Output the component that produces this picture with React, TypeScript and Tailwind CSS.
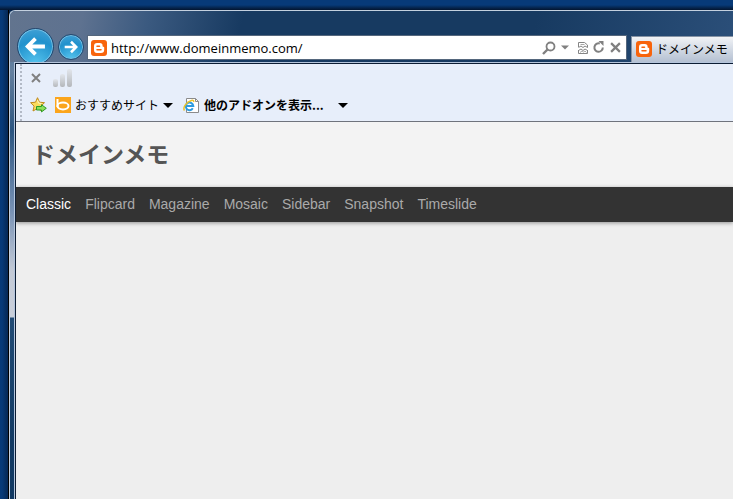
// App.tsx
// Browser window on the desktop, showing the blog in its "Classic" view

import type { ReactNode } from "react";

// ── Icons ─────────────────────────────────────────────────────────────────────

function BloggerIcon() {
  return (
    <svg width="16" height="16" viewBox="0 0 16 16" aria-hidden="true" className="shrink-0">
      <rect width="16" height="16" rx="3" fill="#f8640c" />
      <path
        d="M6 3h2.800a2.800 2.800 0 0 1 2.800 2.800c0 .7.2 1 .8 1 .5 0 .8.3.8.8v2.200A3.200 3.200 0 0 1 10 13H6a3 3 0 0 1-3-3V6a3 3 0 0 1 3-3z"
        fill="#fff"
      />
      <path d="M6 6.200h2.500M6 9.800h4" stroke="#f8640c" strokeWidth="1.500" strokeLinecap="round" />
    </svg>
  );
}

function ArrowIcon({ size }: { size: number }) {
  return (
    <svg width={size} height={size} viewBox="0 0 20 20" aria-hidden="true">
      <path d="M19 10H3M10 2.500L2.500 10l7.500 7.500" fill="none" stroke="#fff" strokeWidth="3.600" />
    </svg>
  );
}

function SearchIcon() {
  return (
    <svg width="14" height="14" viewBox="0 0 14 14" fill="none" stroke="#808080" aria-hidden="true">
      <circle cx="8.500" cy="5.500" r="4" strokeWidth="1.800" />
      <path d="M5.500 8.500L1 13" strokeWidth="2.400" />
    </svg>
  );
}

function BrokenPageIcon() {
  return (
    <svg width="10" height="12" viewBox="0 0 10 12" fill="none" stroke="#858585" aria-hidden="true">
      <path d="M.5 5V.5h6l3 2.500v2.500M.5 8v3.500h9V8" />
      <path d="M.5 5.500L3 4l2 1.500L7 4l2.500 1.500M.5 8.500L3 7l2 1.500L7 7l2.500 1.500" />
      <path d="M2.500 2.500h4M2 10.500l2-1.500 1.500 1L7 9l1.500 1.500" stroke="#a8a8a8" />
    </svg>
  );
}

function RefreshIcon() {
  return (
    <svg width="12" height="13" viewBox="0 0 12 13" fill="none" aria-hidden="true">
      <path d="M9.800 6.500a4.200 4.200 0 1 1-3-4" stroke="#808080" strokeWidth="2" />
      <path d="M5.500 0h5v5z" fill="#808080" />
    </svg>
  );
}

function CrossIcon({ size }: { size: number }) {
  return (
    <svg width={size} height={size} viewBox="0 0 10 10" aria-hidden="true">
      <path d="M1 1l8 8M9 1L1 9" stroke="#808080" strokeWidth="2" />
    </svg>
  );
}

function CaretIcon({ color = "#000" }: { color?: string }) {
  return (
    <svg width="10" height="5" viewBox="0 0 10 5" aria-hidden="true">
      <path d="M0 0h10L5 5z" fill={color} />
    </svg>
  );
}

function SignalIcon() {
  return (
    <svg width="20" height="18" viewBox="0 0 20 18" aria-hidden="true">
      <defs>
        <linearGradient id="signal" x1="0" y1="0" x2="0" y2="1">
          <stop offset="0" stopColor="#e2e6ec" />
          <stop offset="1" stopColor="#b4b7bb" />
        </linearGradient>
      </defs>
      <rect x="0" y="10" width="5" height="8" rx="2" fill="url(#signal)" />
      <rect x="7" y="5" width="5" height="13" rx="2" fill="url(#signal)" />
      <rect x="14" y="0" width="5" height="18" rx="2" fill="url(#signal)" />
    </svg>
  );
}

function AddFavoriteIcon() {
  return (
    <svg width="17" height="16" viewBox="0 0 17 16" aria-hidden="true">
      <path
        d="M7.500.7l2 4.500 5 .5-3.700 3.400 1.100 4.900-4.400-2.500L3 14l1.100-4.900L.6 5.700l4.900-.5z"
        fill="#fbdc5c"
        stroke="#c08a1e"
        strokeLinejoin="round"
      />
      <path d="M7.500 3l1 3 3 .5" fill="none" stroke="#fff8c8" />
      <path
        d="M6.500 9.500h5V7.700l4.800 3.600-4.800 3.600v-1.900h-5z"
        fill="#8ee05a"
        stroke="#2c9a23"
        strokeLinejoin="round"
      />
    </svg>
  );
}

function BingIcon() {
  return (
    <svg width="16" height="16" viewBox="0 0 16 16" aria-hidden="true">
      <rect width="16" height="16" fill="#fba51c" />
      <path d="M2.500 2v8" stroke="#fff" strokeWidth="2" />
      <ellipse cx="8" cy="9" rx="5.500" ry="3.400" fill="none" stroke="#fff" strokeWidth="2" />
    </svg>
  );
}

function IePageIcon() {
  return (
    <svg width="17" height="17" viewBox="0 0 17 17" fill="none" aria-hidden="true">
      <path d="M3.500 1.500h9l3 3v11h-12z" fill="#fff" stroke="#8b8b8b" />
      <path d="M12.500 1.500v3h3" stroke="#8b8b8b" />
      <path d="M9.800 11.300A3.800 3.800 0 1 1 10.300 9H4" stroke="#2c9be0" strokeWidth="2" />
      <path d="M1.500 13.500C-.5 11 3 5 8.500 3.500c2-.5 2.500.5 2 1.500" stroke="#ecc32a" strokeWidth="1.500" />
    </svg>
  );
}

// ── Browser chrome ────────────────────────────────────────────────────────────

function BarButton({ label, children }: { label: string; children: ReactNode }) {
  return (
    <button type="button" aria-label={label} className="flex items-center">
      {children}
    </button>
  );
}

function NavigationBar() {
  return (
    <div className="flex h-[51px] items-end overflow-hidden pl-[7px]">
      <button
        type="button"
        aria-label="戻る"
        className="-mb-[3px] flex size-[37px] shrink-0 items-center justify-center rounded-full border border-[#24486f] bg-[radial-gradient(circle_at_50%_100%,#56c4ee,#2192cd_60%,#4aa5d8)] shadow-[inset_0_0_0_1px_#75bfe3]"
      >
        <ArrowIcon size={21} />
      </button>
      <button
        type="button"
        aria-label="進む"
        className="mb-[2px] ml-1 flex size-[26px] shrink-0 rotate-180 items-center justify-center rounded-full border border-[#24486f] bg-[radial-gradient(circle_at_50%_0%,#56c4ee,#2192cd_60%,#4aa5d8)] shadow-[inset_0_0_0_1px_#75bfe3]"
      >
        <ArrowIcon size={14} />
      </button>

      {/* Address bar */}
      <div className="mb-[2px] ml-[3px] flex h-[25px] min-w-0 flex-1 items-center gap-1 border border-[#55677d] bg-white pr-[5px] pl-[3px]">
        <BloggerIcon />
        <input
          type="text"
          aria-label="アドレス"
          defaultValue="http://www.domeinmemo.com/"
          className="h-5 min-w-0 flex-1 bg-transparent font-['Open_Sans',sans-serif] text-[13px] text-black outline-none"
        />
        <div className="flex items-center gap-[5px]">
          <BarButton label="検索">
            <SearchIcon />
          </BarButton>
          <button type="button" aria-label="検索オプション" className="mr-1 flex w-2 items-center">
            <CaretIcon color="#808080" />
          </button>
          <BarButton label="互換表示">
            <BrokenPageIcon />
          </BarButton>
          <BarButton label="最新の情報に更新">
            <RefreshIcon />
          </BarButton>
          <BarButton label="中止">
            <CrossIcon size={11} />
          </BarButton>
        </div>
      </div>

      {/* Tab */}
      <button
        type="button"
        className="ml-1 flex h-[26px] w-[102px] shrink-0 items-center gap-1 border-t border-l border-[#8593a5] bg-linear-to-b from-[#f1f3f6] to-[#b4c0d2] pb-[2px] pl-1 text-xs whitespace-nowrap text-black"
      >
        <BloggerIcon />
        ドメインメモ
      </button>
    </div>
  );
}

function FavoritesBar() {
  return (
    <div className="flex h-[58px] border-b border-[#6f737c] bg-[#e7eefa] pl-1">
      <div className="border-l-2 border-dotted border-[#b3bac6]" />
      <div className="flex flex-col pl-2">
        <div className="flex h-7 items-center gap-3 pl-px">
          <BarButton label="閉じる">
            <CrossIcon size={10} />
          </BarButton>
          <SignalIcon />
        </div>
        <div className="flex h-[26px] items-center text-xs text-black">
          <BarButton label="お気に入りバーに追加">
            <AddFavoriteIcon />
          </BarButton>
          <button type="button" className="ml-2 flex items-center gap-1">
            <BingIcon />
            おすすめサイト
            <CaretIcon />
          </button>
          <button type="button" className="ml-[10px] flex items-center gap-1 font-bold">
            <IePageIcon />
            他のアドオンを表示...
            <span className="pl-[10px]">
              <CaretIcon />
            </span>
          </button>
        </div>
      </div>
    </div>
  );
}

// ── Blog page ─────────────────────────────────────────────────────────────────

const VIEWS = ["Classic", "Flipcard", "Magazine", "Mosaic", "Sidebar", "Snapshot", "Timeslide"];

function BlogPage() {
  return (
    <main className="flex-1 bg-[#eee]">
      <header className="flex h-[65px] items-center bg-[#f3f3f3] pb-[2px] pl-4">
        <h1 className="text-[23px] font-bold text-[#555]">ドメインメモ</h1>
      </header>
      <nav className="flex h-[35px] items-center gap-[14px] bg-[#333] pb-px pl-[10px] font-['Liberation_Sans',sans-serif] text-sm shadow-[0_1px_4px_#00000066]">
        {VIEWS.map((view, i) => (
          <a key={view} href={`#${view.toLowerCase()}`} className={i === 0 ? "text-white" : "text-[#aaa]"}>
            {view}
          </a>
        ))}
      </nav>
    </main>
  );
}

export default function App() {
  return (
    <div className="flex min-h-screen flex-col bg-linear-to-r from-[#073a78] from-[2px] to-[#04244e] to-[9px] font-['Noto_Sans_CJK_JP',sans-serif]">
      <div className="h-[10px] bg-linear-to-b from-[#073a78] from-50% to-[#03152f]" />
      <div className="ml-2 flex flex-1 flex-col border-l border-black">
        <div className="flex flex-1 flex-col rounded-tl-md border-t border-l border-[#c3d0df] bg-[linear-gradient(#466a92_0px,#64809f_60px,#2b5580_120px,#7892b5_200px,#c3cad6_260px,#c9cfda_306px,#214b75_307px,#123a63_430px)]">
          <div className="rounded-tl-md bg-[linear-gradient(100deg,#62748e,#5e7290_10%,#3b5a80_19%,#173a61_32%,#173a61_72%,#2b4f79)]">
            <NavigationBar />
          </div>
          <div className="ml-1 flex flex-1 flex-col border-t border-l border-[#b5c5dc]">
            <div className="flex flex-1 flex-col overflow-hidden border-t border-l border-[#0b1c33]">
              <FavoritesBar />
              <BlogPage />
            </div>
          </div>
        </div>
      </div>
    </div>
  );
}
